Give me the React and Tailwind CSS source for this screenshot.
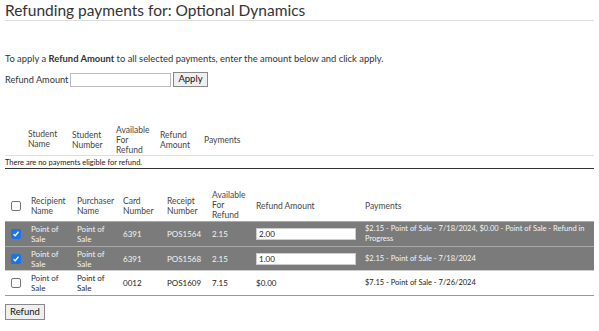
import React from "react";

const font = { fontFamily: 'Lato, "Open Sans", sans-serif' };

function Check({ checked }) {
  return checked ? (
    <span className="inline-flex h-[10px] w-[10px] items-center justify-center rounded-[2px] bg-[#1a73e8]">
      <svg width="8" height="8" viewBox="0 0 8 8">
        <path d="M1.5 4.2 L3.2 5.8 L6.5 1.8" stroke="white" strokeWidth="1.4" fill="none" />
      </svg>
    </span>
  ) : (
    <span className="inline-block h-[10px] w-[10px] rounded-[2px] border border-[#767676] bg-white" />
  );
}

const rows = [
  { checked: true, h: "h-[25px]", card: "6391", receipt: "POS1564", avail: "2.15", amount: "2.00", payments: "$2.15 - Point of Sale - 7/18/2024, $0.00 - Point of Sale - Refund in Progress" },
  { checked: true, h: "h-[24px]", card: "6391", receipt: "POS1568", avail: "2.15", amount: "1.00", payments: "$2.15 - Point of Sale - 7/18/2024" },
  { checked: false, h: "h-[25px]", card: "0012", receipt: "POS1609", avail: "7.15", amount: null, payments: "$7.15 - Point of Sale - 7/26/2024" },
];

export default function App() {
  return (
    <div className="h-[331px] w-[599px] bg-white px-[5px] text-[#333]" style={font}>
      <h1 className="border-b border-[#ddd] pt-[1px] pb-[1px] text-[15.5px] leading-[18px] text-[#333]">
        Refunding payments for: Optional Dynamics
      </h1>

      <p className="mt-[32px] text-[9.4px] leading-[12px]">
        To apply a <b>Refund Amount</b> to all selected payments, enter the amount below and click apply.
      </p>

      <div className="mt-[7px] flex items-center text-[9.2px]">
        <span>Refund Amount</span>
        <span className="ml-[2px] h-[14px] w-[101px] border border-[#bbb] bg-white" />
        <span className="ml-[2px] flex h-[15px] items-center border border-[#888] bg-[#efefef] px-[4px] text-[9.5px] text-[#111]">
          Apply
        </span>
      </div>

      <table className="mt-[38px] w-full border-collapse text-[8.5px] leading-[10px] text-[#444]">
        <thead>
          <tr className="border-b border-[#ddd]">
            <th className="w-[23px]" />
            <th className="w-[44px] pb-[2px] text-left align-middle font-normal">Student<br />Name</th>
            <th className="w-[44px] text-left align-middle font-normal">Student<br />Number</th>
            <th className="w-[44px] text-left align-middle font-normal">Available<br />For<br />Refund</th>
            <th className="w-[44px] text-left align-middle font-normal">Refund<br />Amount</th>
            <th className="text-left align-middle font-normal">Payments</th>
          </tr>
        </thead>
        <tbody>
          <tr className="border-b border-[#333]">
            <td colSpan={6} className="pt-[2px] pb-[1px] text-[7.5px] leading-[9px] text-[#222]">
              There are no payments eligible for refund.
            </td>
          </tr>
        </tbody>
      </table>

      <table className="mt-[21px] w-full border-collapse text-[8.5px] leading-[10px] text-[#444]">
        <thead>
          <tr>
            <th className="w-[22px] pl-[6px] text-left align-middle font-normal">
              <span className="flex"><Check checked={false} /></span>
            </th>
            <th className="w-[46px] pl-[4px] text-left align-middle font-normal">Recipient<br />Name</th>
            <th className="w-[46px] pl-[4px] text-left align-middle font-normal">Purchaser<br />Name</th>
            <th className="w-[44px] pl-[4px] text-left align-middle font-normal">Card<br />Number</th>
            <th className="w-[45px] pl-[4px] text-left align-middle font-normal">Receipt<br />Number</th>
            <th className="w-[44px] pb-[1px] pl-[4px] text-left align-middle font-normal">Available<br />For<br />Refund</th>
            <th className="w-[109px] pl-[4px] text-left align-middle font-normal">Refund Amount</th>
            <th className="pl-[4px] text-left align-middle font-normal">Payments</th>
          </tr>
        </thead>
        <tbody>
          {rows.map((r, i) => (
            <tr
              key={i}
              className={
                r.checked
                  ? "border-t border-[#a8a8a8] bg-[#7b7b7b] text-[#f4f4f4]"
                  : "border-t border-[#ccc] bg-white text-[#222]"
              }
            >
              <td className={r.h + " pl-[6px] align-middle"}>
                <span className="flex"><Check checked={r.checked} /></span>
              </td>
              <td className={"pl-[4px] align-middle text-[8px] leading-[10px] " + (r.checked ? "" : "text-[#1f2f5a]")}>Point of<br />Sale</td>
              <td className="pl-[4px] align-middle text-[8px] leading-[10px]">Point of<br />Sale</td>
              <td className="pl-[4px] align-middle text-[8px]">{r.card}</td>
              <td className="pl-[4px] align-middle text-[8px]">{r.receipt}</td>
              <td className="pl-[4px] align-middle text-[8px]">{r.avail}</td>
              <td className="pl-[4px] pr-[5px] align-middle text-[8px]">
                {r.amount !== null ? (
                  <span className="flex h-[12px] items-center border border-[#ccc] bg-white pl-[2px] text-[#222]">{r.amount}</span>
                ) : (
                  "$0.00"
                )}
              </td>
              <td className="pl-[4px] pr-[2px] align-middle text-[7.5px] leading-[10px]">{r.payments}</td>
            </tr>
          ))}
          <tr className="border-t border-[#999]"><td colSpan={8} /></tr>
        </tbody>
      </table>

      <div className="mt-[8px] flex">
        <span className="flex h-[16px] items-center border border-[#888] bg-[#efefef] px-[4px] text-[9.5px] text-[#111]">
          Refund
        </span>
      </div>
    </div>
  );
}
